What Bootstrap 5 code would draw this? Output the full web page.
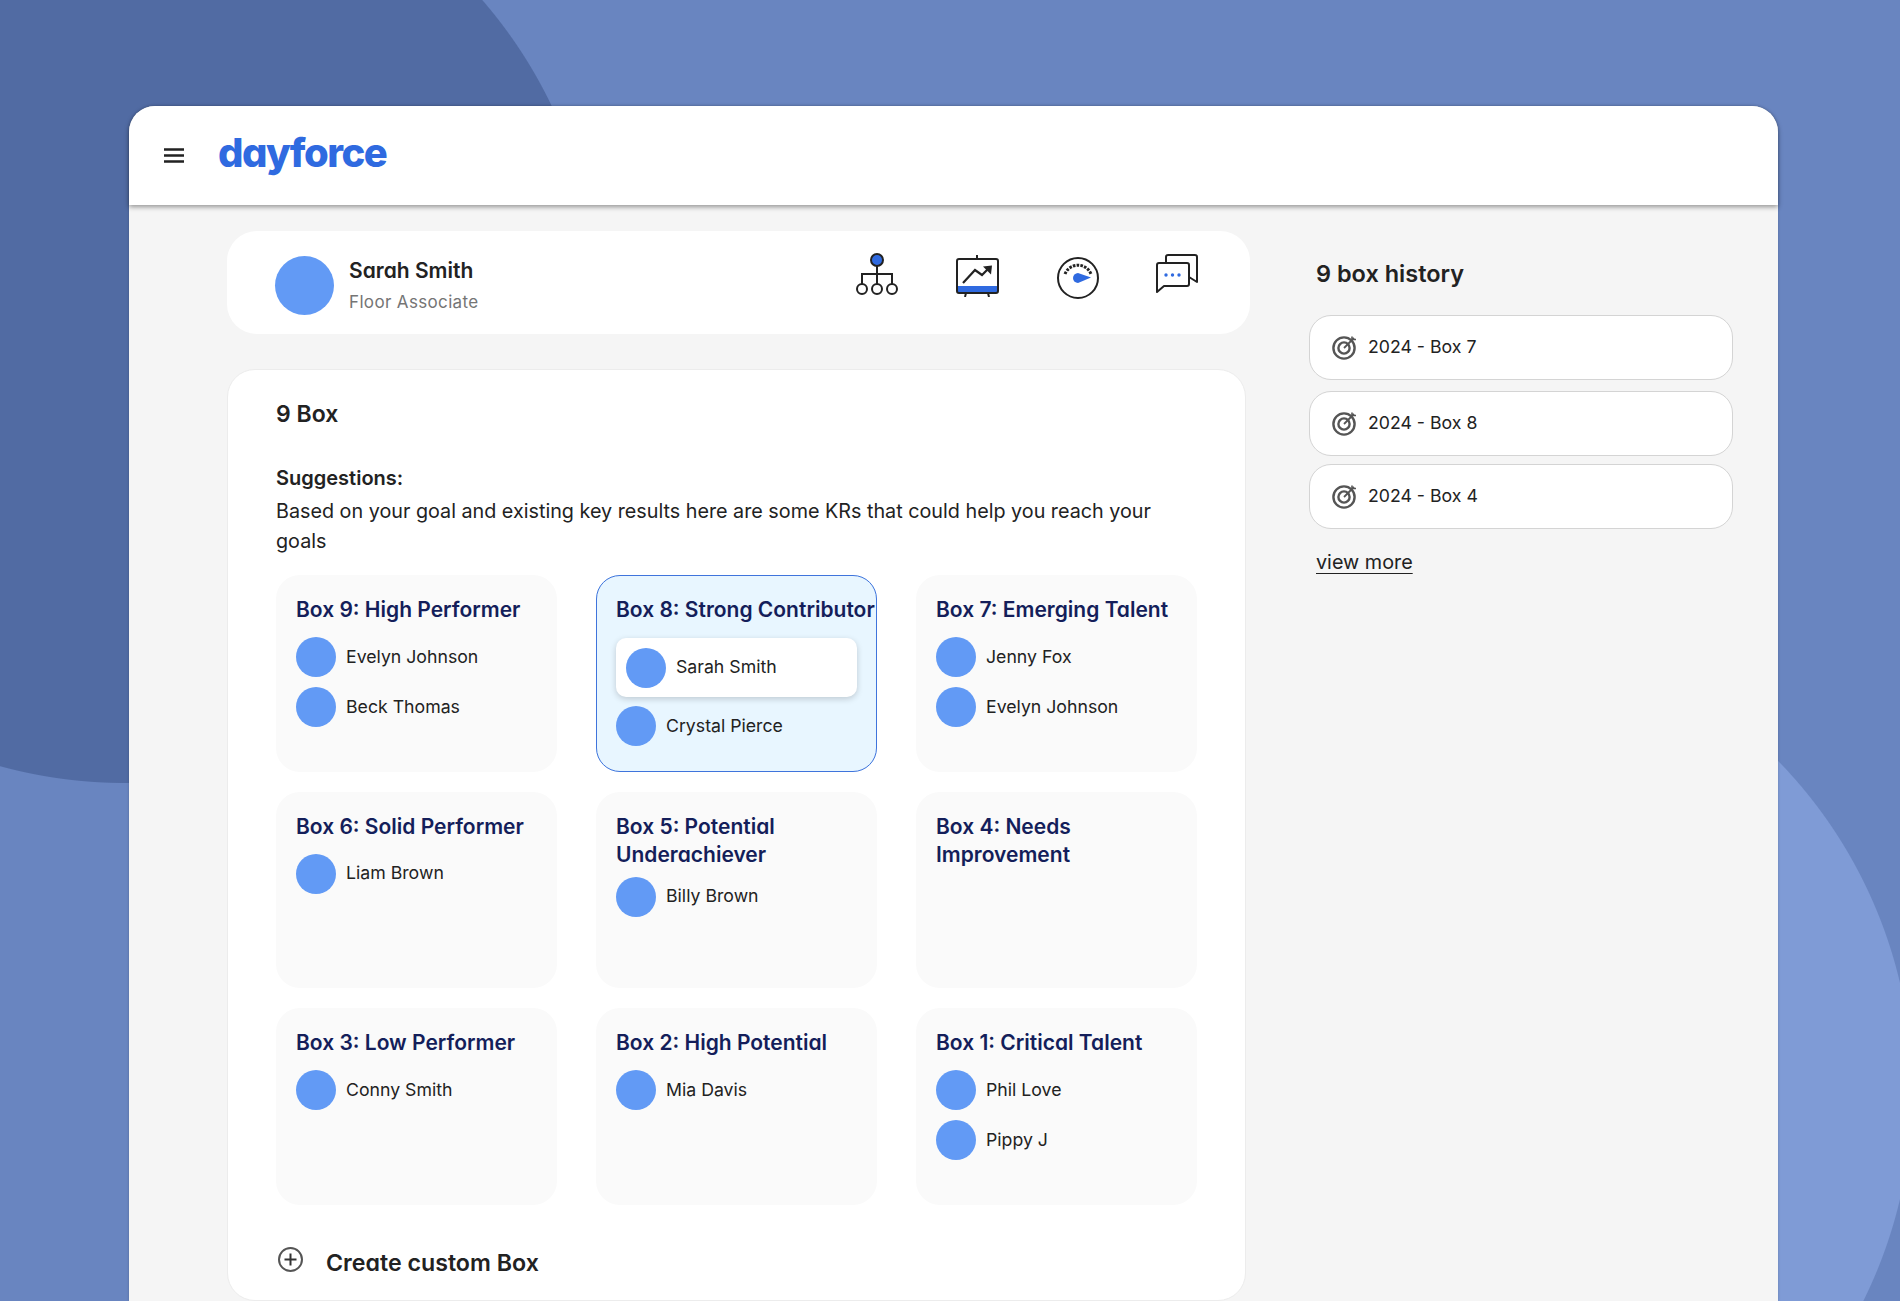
<!DOCTYPE html>
<html lang="en">
<head>
  <meta charset="UTF-8">
  <title>Dayforce 9 Box</title>
  <meta name="viewport" content="width=device-width, initial-scale=1">
  <link href="https://cdn.jsdelivr.net/npm/bootstrap@5.3.0/dist/css/bootstrap.min.css" rel="stylesheet">
  <script src="https://cdn.jsdelivr.net/npm/bootstrap@5.3.0/dist/js/bootstrap.bundle.min.js"></script>
  <style>
    html, body { height: 1301px; overflow: hidden; }
    body {
      font-family: Inter, "Liberation Sans", sans-serif;
      color: #222;
      background-color: #6985c0;
      background-image:
        radial-gradient(circle at 125px 310px, #516ba3 472.5px, transparent 473.5px),
        radial-gradient(circle at 1440px 1091px, #7f9bd6 472px, transparent 473px);
      padding: 106px 122px 0 129px;
    }
    .head-font { font-family: Inter, "Liberation Sans", sans-serif; font-feature-settings: "cv11"; font-weight: 600; }
    .app-window { background: #f5f5f5; height: 1195px; border-radius: 26px 26px 0 0; box-shadow: 0 0 3px rgba(0,0,0,.2); }
    .app-header { height: 99px; background: #fff; border-radius: 26px 26px 0 0; box-shadow: 0 2px 5px rgba(0,0,0,.4); padding-left: 35px; }
    .burger { width: 20px; height: 15px; margin-right: 34px; }
    .brand-name { color: #2f6ae0; font-size: 40px; font-weight: 800; letter-spacing: -1.5px; line-height: 1; margin-top: -6px; }
    .left-col { width: 1023px; margin-left: 98px; padding-top: 26px; }
    .profile-bar { height: 103px; background: #fff; border-radius: 30px; padding: 6px 48px 0; margin-bottom: 35px; }
    .profile-pic { width: 59px; height: 59px; }
    .pic { background: #629af5; border-radius: 50%; flex: none; }
    .profile-name { font-size: 21px; line-height: 26px; color: #222; }
    .profile-role { font-size: 17px; line-height: 24px; color: #757575; margin-top: 6px; letter-spacing: .35px; }
    .profile-text { margin-left: 15px; }
    .tool-icons { gap: 57px; margin-right: 3px; margin-top: -20px; }
    .ico-board { margin-top: 2px; }
    .ico-chat { margin-top: 1px; }
    .ico-gauge { margin-top: 3px; }
    .main-panel { width: 1019px; height: 932px; background: #fff; border: 1px solid #ececec; border-radius: 28px; padding: 29px 48px 0; }
    .panel-title { font-size: 23px; line-height: 30px; margin-bottom: 34px; }
    .sugg-title { font-size: 20px; line-height: 30px; font-weight: 600; }
    .sugg-text { font-size: 19.75px; line-height: 30px; margin-top: 3px; margin-bottom: 19px; }
    .box-grid { display: grid; grid-template-columns: repeat(3, 281px); grid-auto-rows: 196.5px; gap: 20px 39px; }
    .box-tile { background: #fafafa; border-radius: 24px; padding: 21px 20px; }
    .box-tile.picked { background: #e8f6ff; outline: 1.5px solid #3f74dc; outline-offset: -1px; padding-right: 0; overflow: hidden; }
    .box-name { color: #141e5a; font-size: 21px; line-height: 28px; margin-bottom: 13px; }
    .box-name.two-line { margin-bottom: 8px; }
    .picked .box-name { white-space: nowrap; margin-bottom: 14px; }
    .person { font-size: 17.7px; height: 40px; margin-bottom: 10px; }
    .person .pic { width: 40px; height: 40px; margin-right: 10px; }
    .person.raised { background: #fff; height: 59px; width: 241px; padding-left: 10px; margin-bottom: 9px; border-radius: 10px; box-shadow: 0 2px 6px rgba(0,0,0,.18); }
    .add-row { margin-top: 41px; font-size: 23.2px; }
    .add-row svg { margin: -6px 23px 0 2px; }
    .right-col { width: 424px; margin-left: 59px; padding-top: 53px; }
    .hist-title { font-size: 23.5px; line-height: 32px; margin: 0 0 25px 7px; color: #222; }
    .hist-item { height: 65px; background: #fff; border: 1.5px solid #d4d4d4; border-radius: 22px; padding-left: 22px; font-size: 17.7px; margin-bottom: 11px; }
    .hist-item.tight { margin-bottom: 8px; }
    .hist-item.last { margin-bottom: 0; }
    .hist-item svg { margin-right: 11px; }
    .view-link { display: inline-block; margin: 19px 0 0 7px; font-size: 19.8px; line-height: 28px; color: #222; text-underline-offset: 4px; }
  </style>
</head>
<body>
  <div class="app-window d-flex flex-column">
    <header class="app-header d-flex align-items-center">
      <svg class="burger" viewBox="0 0 20 15"><path d="M0 1.5H20M0 7.5H20M0 13.5H20" stroke="#222" stroke-width="2.6"/></svg>
      <span class="brand-name head-font">dayforce</span>
    </header>
    <div class="d-flex">
      <div class="left-col">
        <section class="profile-bar d-flex align-items-center justify-content-between">
          <div class="d-flex align-items-center">
            <div class="pic profile-pic"></div>
            <div class="profile-text">
              <div class="profile-name head-font">Sarah Smith</div>
              <div class="profile-role">Floor Associate</div>
            </div>
          </div>
          <div class="tool-icons d-flex align-items-start">
            <!-- org chart -->
            <svg width="43" height="42" viewBox="0 0 43 42" fill="none" stroke="#222" stroke-width="2"><circle cx="21" cy="7" r="6" fill="#2f6ae0"/><path d="M21 13V31M6 31V21H36V31"/><circle cx="6" cy="36" r="5"/><circle cx="21" cy="36" r="5"/><circle cx="36" cy="36" r="5"/></svg>
            <!-- presentation board -->
            <svg class="ico-board" width="43" height="42" viewBox="0 0 43 42" fill="none" stroke="#222" stroke-width="2"><path d="M2 31H41V37H2Z" fill="#2f6ae0" stroke="none"/><rect x="1" y="4" width="41" height="34" rx="2"/><path d="M21 0V4M10 38L9 42M32 38L33 42"/><path d="M7 28L19 15L26 20L33 13" stroke-width="2.2"/><path d="M36 10.5L27 11.5L35 19.5Z" fill="#222" stroke="none"/></svg>
            <!-- gauge -->
            <svg class="ico-gauge" width="43" height="43" viewBox="0 0 43 43" fill="none" stroke="#222" stroke-width="2"><circle cx="22" cy="22" r="20"/><path d="M9 18A14 14 0 0 1 35 18" stroke-width="3" stroke-dasharray="2.6 1.2"/><path d="M35 21.5L22 17a5.2 5.2 0 0 0-5 5a5 5 0 0 0 5 5Z" fill="#2f6ae0" stroke="none"/></svg>
            <!-- chat bubbles -->
            <svg class="ico-chat" width="43" height="40" viewBox="0 0 43 40" fill="none" stroke="#222" stroke-width="2" stroke-linejoin="round"><path d="M10 8V3a2 2 0 0 1 2-2H39a2 2 0 0 1 2 2V28L33 23"/><path d="M3 9H31a2 2 0 0 1 2 2V30a2 2 0 0 1-2 2H8L1 38V11a2 2 0 0 1 2-2Z"/><g fill="#2f6ae0" stroke="none"><circle cx="10" cy="21" r="1.7"/><circle cx="16.5" cy="21" r="1.7"/><circle cx="23" cy="21" r="1.7"/></g></svg>
          </div>
        </section>

        <section class="main-panel">
          <h2 class="panel-title head-font">9 Box</h2>
          <div class="sugg-title">Suggestions:</div>
          <p class="sugg-text">Based on your goal and existing key results here are some KRs that could help you reach your goals</p>

          <div class="box-grid">
            <div class="box-tile">
              <div class="box-name head-font">Box 9: High Performer</div>
              <div class="person d-flex align-items-center"><span class="pic"></span>Evelyn Johnson</div>
              <div class="person d-flex align-items-center"><span class="pic"></span>Beck Thomas</div>
            </div>
            <div class="box-tile picked">
              <div class="box-name head-font">Box 8: Strong Contributor</div>
              <div class="person raised d-flex align-items-center"><span class="pic"></span>Sarah Smith</div>
              <div class="person d-flex align-items-center"><span class="pic"></span>Crystal Pierce</div>
            </div>
            <div class="box-tile">
              <div class="box-name head-font">Box 7: Emerging Talent</div>
              <div class="person d-flex align-items-center"><span class="pic"></span>Jenny Fox</div>
              <div class="person d-flex align-items-center"><span class="pic"></span>Evelyn Johnson</div>
            </div>
            <div class="box-tile">
              <div class="box-name head-font">Box 6: Solid Performer</div>
              <div class="person d-flex align-items-center"><span class="pic"></span>Liam Brown</div>
            </div>
            <div class="box-tile">
              <div class="box-name two-line head-font">Box 5: Potential<br>Underachiever</div>
              <div class="person d-flex align-items-center"><span class="pic"></span>Billy Brown</div>
            </div>
            <div class="box-tile">
              <div class="box-name two-line head-font">Box 4: Needs<br>Improvement</div>
            </div>
            <div class="box-tile">
              <div class="box-name head-font">Box 3: Low Performer</div>
              <div class="person d-flex align-items-center"><span class="pic"></span>Conny Smith</div>
            </div>
            <div class="box-tile">
              <div class="box-name head-font">Box 2: High Potential</div>
              <div class="person d-flex align-items-center"><span class="pic"></span>Mia Davis</div>
            </div>
            <div class="box-tile">
              <div class="box-name head-font">Box 1: Critical Talent</div>
              <div class="person d-flex align-items-center"><span class="pic"></span>Phil Love</div>
              <div class="person d-flex align-items-center"><span class="pic"></span>Pippy J</div>
            </div>
          </div>

          <div class="add-row head-font d-flex align-items-center">
            <svg width="25" height="25" viewBox="0 0 25 25" fill="none" stroke="#555" stroke-width="2"><circle cx="12.5" cy="12.5" r="11.5"/><path d="M12.5 6.5V18.5M6.5 12.5H18.5" stroke="#333"/></svg>
            Create custom Box
          </div>
        </section>
      </div>

      <aside class="right-col">
        <h2 class="hist-title head-font">9 box history</h2>
        <div class="hist-item d-flex align-items-center">
          <svg width="25" height="25" viewBox="0 0 25 25" fill="none" stroke="#555" stroke-width="2.4"><circle cx="12" cy="13" r="10.6"/><circle cx="12" cy="13" r="5.6"/><path d="M12 13L22 3" stroke-width="1.8"/><path d="M20 5V1.5M20.5 4.5H24" stroke-width="1.6"/></svg>
          2024 - Box 7
        </div>
        <div class="hist-item tight d-flex align-items-center">
          <svg width="25" height="25" viewBox="0 0 25 25" fill="none" stroke="#555" stroke-width="2.4"><circle cx="12" cy="13" r="10.6"/><circle cx="12" cy="13" r="5.6"/><path d="M12 13L22 3" stroke-width="1.8"/><path d="M20 5V1.5M20.5 4.5H24" stroke-width="1.6"/></svg>
          2024 - Box 8
        </div>
        <div class="hist-item last d-flex align-items-center">
          <svg width="25" height="25" viewBox="0 0 25 25" fill="none" stroke="#555" stroke-width="2.4"><circle cx="12" cy="13" r="10.6"/><circle cx="12" cy="13" r="5.6"/><path d="M12 13L22 3" stroke-width="1.8"/><path d="M20 5V1.5M20.5 4.5H24" stroke-width="1.6"/></svg>
          2024 - Box 4
        </div>
        <a href="#" class="view-link">view more</a>
      </aside>
    </div>
  </div>
</body>
</html>
